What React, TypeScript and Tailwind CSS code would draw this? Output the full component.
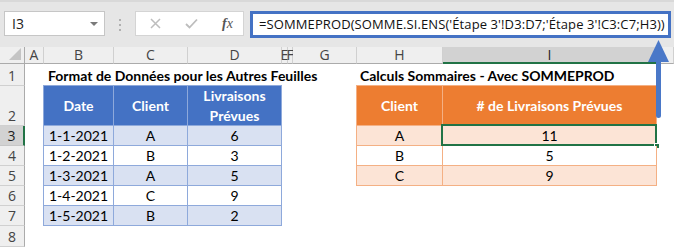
import React from "react";

const sheetFont = { fontFamily: "Lato, 'Open Sans', sans-serif" };
const uiFont = { fontFamily: "'Open Sans', 'Noto Sans', sans-serif" };

const cols = ["A", "B", "C", "D", "E", "F", "G", "H", "I", ""];

function ColHeader({ label, active }: { label: string; active?: boolean }) {
  return (
    <div
      className={
        "flex items-center justify-center border-r border-b text-[14px] leading-none overflow-visible " +
        (active
          ? "bg-[#d2d2d2] border-r-[#c6c6c6] border-b-2 border-b-[#217346] text-[#222]"
          : "bg-[#efefef] border-r-[#d0d0d0] border-b-[#ababab] text-[#444]")
      }
    >
      {label}
    </div>
  );
}

const blueRows = [
  ["1-1-2021", "A", "6"],
  ["1-2-2021", "B", "3"],
  ["1-3-2021", "A", "5"],
  ["1-4-2021", "C", "9"],
  ["1-5-2021", "B", "2"],
];

const orangeRows = [
  ["A", "11"],
  ["B", "5"],
  ["C", "9"],
];

const rowStarts = [
  "row-start-2",
  "row-start-3",
  "row-start-4",
  "row-start-5",
  "row-start-6",
  "row-start-7",
  "row-start-8",
  "row-start-9",
];

function RowHeaderCell({ n }: { n: number }) {
  const active = n === 3;
  return (
    <div
      className={
        "col-start-1 " +
        rowStarts[n - 1] +
        " flex items-end justify-center pb-[2px] border-b text-[14px] leading-none " +
        (active
          ? "bg-[#d2d2d2] border-r-2 border-r-[#217346] border-b-[#c6c6c6] text-[#222]"
          : "bg-[#efefef] border-r border-r-[#ababab] border-b-[#d0d0d0] text-[#444]")
      }
      style={uiFont}
    >
      {n}
    </div>
  );
}

export default function App() {
  return (
    <div className="relative w-[674px] h-[247px] overflow-hidden bg-white">
      {/* formula bar */}
      <div className="h-[47px] bg-[#e6e6e6] border-t-2 border-t-[#d9d9d9] flex items-start pt-[9px]" style={uiFont}>
        <div className="ml-[4px] w-[101px] h-[25px] bg-white border border-[#c6c6c6] flex items-center pl-[7px] pr-[6px]">
          <span className="text-[14px] text-[#222] leading-none">I3</span>
          <span className="ml-auto w-0 h-0 border-l-[4px] border-r-[4px] border-t-[4px] border-l-transparent border-r-transparent border-t-[#7a7a7a]" />
        </div>
        <div className="ml-[14px] mt-[8px] flex flex-col gap-[3px]">
          <span className="w-[2px] h-[2px] bg-[#b0b0b0]" />
          <span className="w-[2px] h-[2px] bg-[#b0b0b0]" />
          <span className="w-[2px] h-[2px] bg-[#b0b0b0]" />
        </div>
        <div className="ml-[14px] w-[109px] h-[25px] bg-white border border-[#d4d4d4] flex items-center">
          <svg className="ml-[14px]" width="11" height="11" viewBox="0 0 11 11">
            <path d="M1 1L10 10M10 1L1 10" stroke="#bdbdbd" strokeWidth="1.5" />
          </svg>
          <svg className="ml-[24px]" width="13" height="11" viewBox="0 0 13 11">
            <path d="M1 6L4.5 9.5L12 1.5" stroke="#bdbdbd" strokeWidth="1.8" fill="none" />
          </svg>
          <span
            className="ml-[24px] text-[14px] italic text-[#555] leading-none"
            style={{ fontFamily: "'Liberation Serif', serif" }}
          >
            <span className="font-bold">f</span>x
          </span>
        </div>
        <div className="ml-[6px] w-[421px] h-[27px] bg-white border-[3px] border-[#4472c4] flex items-center pl-[6px] overflow-hidden">
          <span className="text-[13px] tracking-[0.1px] text-[#111] leading-none whitespace-nowrap">
            =SOMMEPROD(SOMME.SI.ENS('Étape 3'!D3:D7;'Étape 3'!C3:C7;H3))
          </span>
        </div>
      </div>

      {/* sheet grid */}
      <div
        className="grid grid-cols-[25px_19px_70px_74px_94px_6px_5px_64px_86px_214px_1fr] grid-rows-[17px_22px_40px_20px_20px_20px_20px_20px_21px]"
        style={sheetFont}
      >
        {/* select-all corner */}
        <div className="relative bg-[#efefef] border-r border-b border-[#ababab]">
          <svg className="absolute right-[3px] bottom-[3px]" width="12" height="12" viewBox="0 0 12 12">
            <polygon points="12,0 12,12 0,12" fill="#c4c4c4" />
          </svg>
        </div>
        {cols.map((c, i) => (
          <div key={i} className="contents" style={uiFont}>
            <ColHeader label={c} active={c === "I"} />
          </div>
        ))}

        {[1, 2, 3, 4, 5, 6, 7, 8].map((n) => (
          <RowHeaderCell key={n} n={n} />
        ))}

        {/* titles */}
        <div className="col-start-3 col-span-6 row-start-2 flex items-end pl-[4px] pb-[3px] whitespace-nowrap text-[14px] font-bold text-black leading-none">
          Format de Données pour les Autres Feuilles
        </div>
        <div className="col-start-9 col-span-2 row-start-2 flex items-end pl-[3px] pb-[3px] whitespace-nowrap text-[14px] font-bold text-black leading-none">
          Calculs Sommaires - Avec SOMMEPROD
        </div>

        {/* source table */}
        <div className="col-start-3 col-span-3 row-start-3 row-span-6 grid grid-cols-[70px_74px_94px] grid-rows-[40px_20px_20px_20px_20px_20px] border-l border-t border-[#8ea9db] -ml-px -mt-px text-[14px] text-black">
          {["Date", "Client", "Livraisons\nPrévues"].map((h) => (
            <div
              key={h}
              className="bg-[#4472c4] text-white font-bold flex items-center justify-center text-center leading-[20px] whitespace-pre-line border-r border-b border-[#8ea9db]"
            >
              {h}
            </div>
          ))}
          {blueRows.map((r, ri) =>
            r.map((v, ci) => (
              <div
                key={ri + "-" + ci}
                className={
                  "flex items-center justify-center border-r border-b border-[#8ea9db] leading-none " +
                  (ri % 2 === 0 ? "bg-[#d9e1f2]" : "bg-white")
                }
              >
                {v}
              </div>
            ))
          )}
        </div>

        {/* summary table */}
        <div className="col-start-9 col-span-2 row-start-3 row-span-4 grid grid-cols-[86px_214px] grid-rows-[40px_20px_20px_20px] border-l border-t border-[#f4b084] -ml-px -mt-px text-[14px] text-black">
          {["Client", "# de Livraisons Prévues"].map((h) => (
            <div
              key={h}
              className="bg-[#ed7d31] text-white font-bold flex items-center justify-center border-r border-b border-[#f4b084] leading-none"
            >
              {h}
            </div>
          ))}
          {orangeRows.map((r, ri) =>
            r.map((v, ci) => (
              <div
                key={ri + "-" + ci}
                className={
                  "relative flex items-center justify-center border-r border-b border-[#f4b084] leading-none " +
                  (ri % 2 === 0 ? "bg-[#fce4d6]" : "bg-white")
                }
              >
                {v}
                {ri === 0 && ci === 1 && (
                  <>
                    <span className="absolute -left-[2px] -top-[2px] -right-[1px] -bottom-[1px] border-2 border-[#217346]" />
                    <span className="absolute -right-[4px] -bottom-[4px] w-[6px] h-[6px] bg-[#217346] border border-white" />
                  </>
                )}
              </div>
            ))
          )}
        </div>
      </div>

      {/* arrow pointing at the formula */}
      <svg className="absolute left-0 top-0 pointer-events-none" width="674" height="247">
        <rect x="656" y="56" width="5" height="62" rx="2.5" fill="#4a78c8" />
        <polygon points="658.5,40 648,62 669,62" fill="#4a78c8" />
      </svg>
    </div>
  );
}
